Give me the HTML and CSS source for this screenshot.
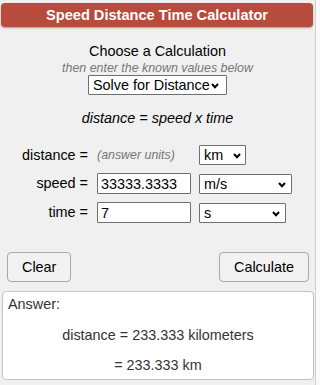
FILE: index.html
```html
<!DOCTYPE html>
<html lang="en">
<head>
<meta charset="utf-8">
<title>Speed Distance Time Calculator</title>
<link rel="stylesheet" href="styles.css">
</head>
<body>
<div class="calc">
  <div class="title">Speed Distance Time Calculator</div>
  <div class="intro">
    <div class="choose">Choose a Calculation</div>
    <div class="hint">then enter the known values below</div>
    <div class="sel sel-mode">
      <select><option>Solve for Distance</option></select>
      <svg class="chev" width="8" height="6" viewBox="0 0 8 6"><polyline points="1,1 4,4.2 7,1" fill="none" stroke="#000" stroke-width="2"/></svg>
    </div>
  </div>
  <div class="formula">distance = speed x time</div>
  <div class="fields">
    <div class="lbl">distance =</div>
    <div class="units-note">(answer units)</div>
    <div class="sel sel-km">
      <select><option>km</option></select>
      <svg class="chev" width="8" height="6" viewBox="0 0 8 6"><polyline points="1,1 4,4.2 7,1" fill="none" stroke="#000" stroke-width="2"/></svg>
    </div>

    <div class="lbl">speed =</div>
    <input class="num" type="text" value="33333.3333">
    <div class="sel sel-ms">
      <select><option>m/s</option></select>
      <svg class="chev" width="8" height="6" viewBox="0 0 8 6"><polyline points="1,1 4,4.2 7,1" fill="none" stroke="#000" stroke-width="2"/></svg>
    </div>

    <div class="lbl">time =</div>
    <input class="num" type="text" value="7">
    <div class="sel sel-s">
      <select><option>s</option></select>
      <svg class="chev" width="8" height="6" viewBox="0 0 8 6"><polyline points="1,1 4,4.2 7,1" fill="none" stroke="#000" stroke-width="2"/></svg>
    </div>
  </div>
  <div class="buttons">
    <button class="btn">Clear</button>
    <button class="btn">Calculate</button>
  </div>
  <div class="answer">
    <div class="answer-head">Answer:</div>
    <div class="result">distance = 233.333 kilometers</div>
    <div class="result">= 233.333 km</div>
  </div>
</div>
</body>
</html>
```

FILE: styles.css
```css
html, body {
  margin: 0;
  padding: 0;
}
body {
  background: #fafafa;
  font-family: "Liberation Sans", Arial, sans-serif;
  font-size: 14.4px;
  color: #000;
}
.calc {
  box-sizing: border-box;
  width: 316px;
  height: 385px;
  background: #f0f0f0;
  border-right: 1px solid #d0d0d0;
  padding-top: 3px;
}
.title {
  margin: 0 2px 0 1px;
  height: 24px;
  line-height: 24px;
  background: #b74b3c;
  color: #fff;
  font-weight: bold;
  font-size: 14.6px;
  text-align: center;
  border-radius: 4px;
  box-shadow: 0 1px 2px rgba(0, 0, 0, 0.35);
}
.intro {
  text-align: center;
  margin-top: 16px;
}
.choose {
  line-height: 17px;
}
.hint {
  margin-top: 1px;
  font-size: 12.4px;
  line-height: 14px;
  font-style: italic;
  color: #777;
}
.sel {
  position: relative;
  display: inline-block;
  vertical-align: top;
  justify-self: start;
}
.sel select {
  -webkit-appearance: none;
  appearance: none;
  box-sizing: border-box;
  height: 20px;
  margin: 0;
  padding: 0 4px;
  border: 1px solid #6f6f6f;
  border-radius: 1px;
  background: #fff;
  color: #000;
  font-family: "Liberation Sans", Arial, sans-serif;
  font-size: 14.4px;
  line-height: 18px;
  display: block;
}
.chev {
  position: absolute;
  top: 8px;
  right: 6px;
  pointer-events: none;
}
.sel-mode select {
  width: 139px;
  padding-left: 4px;
}
.sel-mode .chev {
  right: 8px;
}
.sel-km select { width: 47px; }
.sel-km .chev { right: 5px; }
.sel-ms select { width: 93px; }
.sel-s select { width: 87px; }

.formula {
  margin-top: 15px;
  text-align: center;
  font-style: italic;
  line-height: 17px;
}
.fields {
  margin-top: 18px;
  display: grid;
  grid-template-columns: 97px 102px auto;
  row-gap: 8px;
  align-items: center;
}
.lbl {
  text-align: right;
  padding-right: 9px;
  line-height: 17px;
}
.units-note {
  font-size: 12.4px;
  font-style: italic;
  color: #777;
}
.num {
  box-sizing: border-box;
  width: 94px;
  height: 21px;
  margin: 0;
  padding: 1px 3px;
  border: 1px solid #6f6f6f;
  border-radius: 1px;
  background: #fff;
  font-family: "Liberation Sans", Arial, sans-serif;
  font-size: 14.4px;
  color: #000;
}
.buttons {
  margin-top: 29px;
  display: flex;
  justify-content: space-between;
  padding: 0 6px 0 7px;
}
.btn {
  height: 30px;
  padding: 0 14px;
  margin: 0;
  border: 1px solid #a8a8a8;
  border-radius: 4px;
  background: #f2f2f2;
  font-family: "Liberation Sans", Arial, sans-serif;
  font-size: 14.4px;
  color: #000;
}
.answer {
  margin: 9px 1px 0 2px;
  padding: 4px 5px 5px;
  background: #fff;
  border: 1px solid #c4c4c4;
  border-radius: 4px;
  color: #333;
  line-height: 17px;
}
.result {
  margin-top: 14px;
  text-align: center;
}
.result + .result {
  margin-top: 13px;
}
```
